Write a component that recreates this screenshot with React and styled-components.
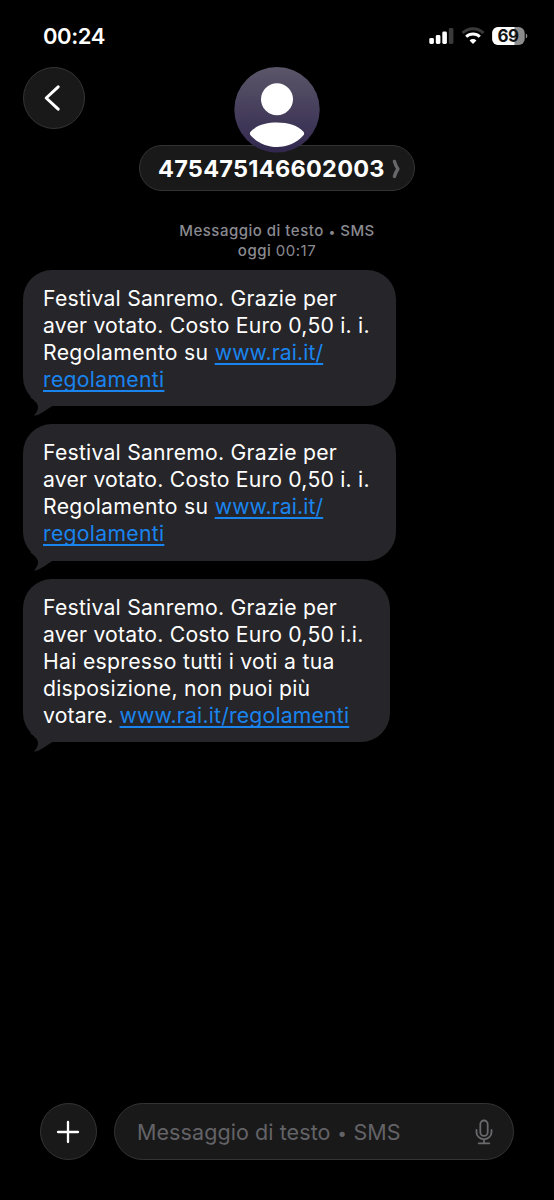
import React from "react";
import styled, { createGlobalStyle, css } from "styled-components";

const GlobalStyle = createGlobalStyle`
  * {
    box-sizing: border-box;
  }
  body {
    margin: 0;
    background: #000;
  }
`;

const glass = css`
  background: #191919;
  border: 1px solid #343434;
`;

const Screen = styled.main`
  display: flex;
  flex-direction: column;
  width: 554px;
  height: 1200px;
  overflow: hidden;
  background: #000;
  color: #fff;
  font-family: Inter, "Liberation Sans", sans-serif;
`;

const StatusBar = styled.div`
  display: flex;
  align-items: center;
  justify-content: space-between;
  height: 67px;
  padding: 4px 26px 0 43px;
`;

const Time = styled.span`
  font-size: 22px;
  font-weight: 600;
  line-height: 28px;
  letter-spacing: -0.4px;
`;

const StatusIcons = styled.div`
  display: flex;
  align-items: center;
`;

const Header = styled.header`
  display: grid;
  grid-template-columns: 62px 1fr 62px;
  align-items: start;
  height: 123px;
  padding: 0 23px;
`;

const BackButton = styled.button`
  ${glass}
  display: flex;
  align-items: center;
  justify-content: center;
  width: 62px;
  height: 62px;
  padding: 0 4px 0 0;
  border-radius: 50%;
`;

const Contact = styled.div`
  display: flex;
  flex-direction: column;
  align-items: center;
`;

const Avatar = styled.svg`
  z-index: 1;
  margin-bottom: -8px;
`;

const ContactName = styled.div`
  ${glass}
  display: flex;
  align-items: center;
  justify-content: space-between;
  width: 276px;
  height: 46px;
  padding: 1px 13px 0 18px;
  border-radius: 23px;
  font-size: 23.5px;
  font-weight: 700;
  letter-spacing: 0.27px;
  white-space: nowrap;
`;

const Stamp = styled.div`
  display: flex;
  flex-direction: column;
  align-items: center;
  height: 80px;
  padding-top: 31px;
  color: #8a8a90;
  font-size: 15px;
  font-weight: 450;
  line-height: 20px;
  letter-spacing: 0.5px;

  span {
    font-weight: 400;
  }
`;

const Dot = styled.i`
  display: inline-block;
  width: 0.62em;
  font-size: 0.8em;
  font-style: normal;
  line-height: 1;
  letter-spacing: 0;
  text-align: center;
  vertical-align: 0.02em;
`;

const Messages = styled.section`
  display: flex;
  flex: 1;
  flex-direction: column;
  align-items: flex-start;
  gap: 18px;
  padding-left: 23px;
`;

const Bubble = styled.article`
  position: relative;
  width: ${props => props.$width}px;
  padding: 15px 0 13.3px 20px;
  border-radius: 29px;
  background: #262529;
`;

const Tail = styled.svg`
  position: absolute;
  bottom: -10px;
  left: 4px;
`;

const Line = styled.div`
  height: 27px;
  font-size: 21.2px;
  line-height: 27px;
  letter-spacing: ${props => props.$spacing}px;
  white-space: nowrap;
`;

const Link = styled.a`
  color: #1a84ee;
  letter-spacing: ${props => props.$spacing}px;
  text-decoration: underline;
  text-decoration-thickness: 1.5px;
  text-decoration-skip-ink: none;
  text-underline-offset: 3px;
`;

const Composer = styled.footer`
  display: flex;
  gap: 17px;
  height: 97px;
  padding: 0 40px;
`;

const AddButton = styled.button`
  ${glass}
  display: flex;
  align-items: center;
  justify-content: center;
  width: 57px;
  height: 57px;
  padding: 0 1px 0 0;
  border-radius: 50%;
`;

const Field = styled.div`
  ${glass}
  display: flex;
  flex: 1;
  align-items: center;
  justify-content: space-between;
  height: 57px;
  padding: 0 20px 0 22px;
  border-radius: 29px;
  color: #636367;
  font-size: 21.5px;
  letter-spacing: 0.08px;
  white-space: nowrap;
`;

const SignalIcon = () => (
  <svg width="26" height="18" viewBox="0 0 26 18">
    <rect x="0.3" y="11" width="4.6" height="6" rx="1.4" fill="#fff" />
    <rect x="6.8" y="8" width="4.6" height="9" rx="1.4" fill="#fff" />
    <rect x="13.3" y="4.5" width="4.6" height="12.5" rx="1.4" fill="#fff" />
    <rect x="19.8" y="1" width="4.6" height="16" rx="1.4" fill="#3a3a3a" />
  </svg>
);

const WifiIcon = () => (
  <svg width="36" height="18" viewBox="0 0 36 18" fill="none">
    <path d="M7.5 6a15 15 0 0 1 21 0" stroke="#3a3a3a" strokeWidth="3" />
    <path d="M11.2 9.8a9.7 9.7 0 0 1 13.6 0" stroke="#fff" strokeWidth="3" />
    <path d="M14.6 13.4a4.8 4.8 0 0 1 6.8 0L18 17z" fill="#fff" />
  </svg>
);

const BatteryIcon = ({ level }) => (
  <svg width="37" height="20" viewBox="0 0 37 20">
    <defs>
      <clipPath id="battery">
        <rect x="1.2" y="1" width="32.5" height="18" rx="6" />
      </clipPath>
    </defs>
    <g clipPath="url(#battery)">
      <rect width="34" height="20" fill="#8c8c8c" />
      <rect width={(level * 34) / 100} height="20" fill="#fff" />
    </g>
    <path d="M34.8 7.5c2 .7 2 4.3 0 5z" fill="#8c8c8c" />
    <text
      x="17"
      y="16.2"
      textAnchor="middle"
      fontFamily="Inter, sans-serif"
      fontSize="17"
      fontWeight="700"
      letterSpacing="-0.5"
      fill="#111"
    >
      {level}
    </text>
  </svg>
);

const BackIcon = () => (
  <svg width="18" height="28" viewBox="0 0 18 28" fill="none">
    <path
      d="M15.2 2.8L3.2 14L15.2 25.2"
      stroke="#fff"
      strokeWidth="3"
      strokeLinecap="round"
      strokeLinejoin="round"
    />
  </svg>
);

const ChevronIcon = () => (
  <svg width="9" height="20" viewBox="0 0 9 20" fill="none">
    <path
      d="M2.4 2.4Q3.6 6.6 5.9 10Q3.6 13.4 2.4 17.4"
      stroke="#68686a"
      strokeWidth="3.4"
      strokeLinecap="round"
      strokeLinejoin="round"
    />
  </svg>
);

const PlusIcon = () => (
  <svg width="24" height="24" viewBox="0 0 24 24" fill="none">
    <path
      d="M12 2v20M2 12h20"
      stroke="#fff"
      strokeWidth="2.3"
      strokeLinecap="round"
    />
  </svg>
);

const MicIcon = () => (
  <svg width="18" height="26" viewBox="0 0 18 26" fill="none">
    <g stroke="#6a6a6e" strokeWidth="1.8" strokeLinecap="round">
      <rect x="5.3" y="1.5" width="7.4" height="15.4" rx="3.7" />
      <path d="M1.5 11v2.2a7.5 7.1 0 0 0 15 0V11M9 20.4v3.8M3.7 24.3h10.6" />
    </g>
  </svg>
);

const voteReceipt = {
  width: 373,
  lines: [
    { text: "Festival Sanremo. Grazie per", spacing: 0.23 },
    { text: "aver votato. Costo Euro 0,50 i. i.", spacing: 0.21 },
    {
      text: "Regolamento su ",
      link: "www.rai.it/",
      spacing: 0.32,
      linkSpacing: 0.1
    },
    { link: "regolamenti", linkSpacing: 0.29 }
  ]
};

const lastVoteReceipt = {
  width: 367,
  lines: [
    { text: "Festival Sanremo. Grazie per", spacing: 0.23 },
    { text: "aver votato. Costo Euro 0,50 i.i.", spacing: 0.21 },
    { text: "Hai espresso tutti i voti a tua", spacing: 0.29 },
    { text: "disposizione, non puoi più", spacing: 0.23 },
    {
      text: "votare. ",
      link: "www.rai.it/regolamenti",
      spacing: 0.17,
      linkSpacing: 0.19
    }
  ]
};

const messages = [voteReceipt, voteReceipt, lastVoteReceipt];

const Message = ({ width, lines }) => (
  <Bubble $width={width}>
    {lines.map((line, i) => (
      <Line key={i} $spacing={line.spacing || 0}>
        {line.text}
        {line.link && <Link $spacing={line.linkSpacing}>{line.link}</Link>}
      </Line>
    ))}
    <Tail width="30" height="24" viewBox="0 0 30 24">
      <path
        d="M3 5C8 9 11.5 12 11 16C10.7 19 9 21 7 23.8C14 22.8 18 18 25 14.2L26 6Z"
        fill="#262529"
      />
    </Tail>
  </Bubble>
);

const App = () => (
  <Screen>
    <GlobalStyle />
    <StatusBar>
      <Time>00:24</Time>
      <StatusIcons>
        <SignalIcon />
        <WifiIcon />
        <BatteryIcon level={69} />
      </StatusIcons>
    </StatusBar>
    <Header>
      <BackButton>
        <BackIcon />
      </BackButton>
      <Contact>
        <Avatar width="86" height="86" viewBox="0 0 86 86">
          <defs>
            <linearGradient id="avatar" x1="0" y1="0" x2="0" y2="1">
              <stop offset="0" stopColor="#5b5669" />
              <stop offset="1" stopColor="#32284f" />
            </linearGradient>
          </defs>
          <circle cx="43" cy="42.7" r="42.7" fill="url(#avatar)" />
          <circle cx="43" cy="32.3" r="16" fill="#fff" />
          <path
            d="M16.3 65C22 58.5 32 55.6 43 55.6S64 58.5 69.7 65Q70.6 66.5 69.7 68C63 76 53 80 43 80S23 76 16.3 68Q15.4 66.5 16.3 65Z"
            fill="#fff"
          />
        </Avatar>
        <ContactName>
          475475146602003
          <ChevronIcon />
        </ContactName>
      </Contact>
    </Header>
    <Stamp>
      <div>
        Messaggio di testo <Dot>•</Dot> SMS
      </div>
      <div>
        oggi <span>00:17</span>
      </div>
    </Stamp>
    <Messages>
      {messages.map((message, i) => (
        <Message key={i} {...message} />
      ))}
    </Messages>
    <Composer>
      <AddButton>
        <PlusIcon />
      </AddButton>
      <Field>
        <div>
          Messaggio di testo <Dot>•</Dot> SMS
        </div>
        <MicIcon />
      </Field>
    </Composer>
  </Screen>
);

export default App;
